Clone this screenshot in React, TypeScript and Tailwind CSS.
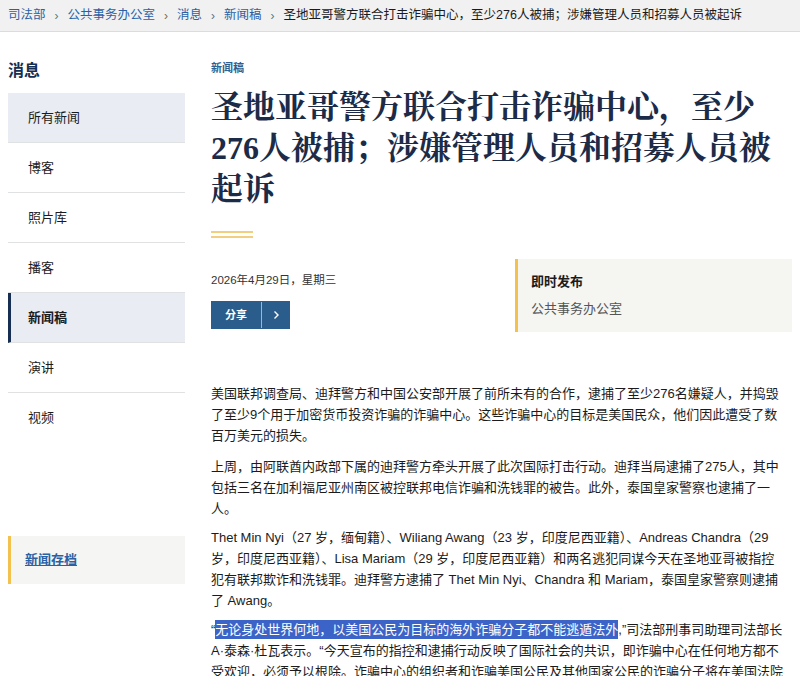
const sans = "font-['Liberation_Sans','Noto_Sans_CJK_SC',sans-serif]";

const navItems = [
  { label: '所有新闻', tone: 'shaded' },
  { label: '博客' },
  { label: '照片库' },
  { label: '播客' },
  { label: '新闻稿', tone: 'active' },
  { label: '演讲' },
  { label: '视频', last: true },
];

const crumbs = ['司法部', '公共事务办公室', '消息', '新闻稿'];

function Breadcrumb() {
  return (
    <div className="h-8 bg-[#f1f1f1] border-b border-[#dcdcdc] flex items-center px-2 text-[12.5px]">
      {crumbs.map((c) => (
        <span key={c} className="flex items-center">
          <a href="#" className="text-[#2a61a4]">{c}</a>
          <span className="mx-[9px] text-[#6d6d6d] text-[12px]">›</span>
        </span>
      ))}
      <span className="text-[#1b1b1b]">圣地亚哥警方联合打击诈骗中心，至少276人被捕；涉嫌管理人员和招募人员被起诉</span>
    </div>
  );
}

function Sidebar() {
  return (
    <aside className="w-[177px] shrink-0">
      <h2 className="mt-[29px] mb-[12px] text-[16px] leading-[20px] font-bold text-[#162e51]">消息</h2>
      <nav className="flex flex-col">
        {navItems.map((item) => (
          <a
            key={item.label}
            href="#"
            className={
              'h-[50px] flex items-center text-[13px] ' +
              (item.last ? '' : 'border-b border-[#dfe1e2] ') +
              (item.tone === 'active'
                ? 'bg-[#e9ecf2] border-l-[3px] border-l-[#162e51] pl-[17px] font-bold text-[#1b1b1b]'
                : item.tone === 'shaded'
                ? 'bg-[#e9ecf2] pl-5 text-[#1b1b1b]'
                : 'pl-5 text-[#1b1b1b]')
            }
          >
            {item.label}
          </a>
        ))}
      </nav>
      <div className="mt-[93px] h-[48px] bg-[#f5f5f3] border-l-[3px] border-[#f2c14e] flex items-center pl-[14px]">
        <a href="#" className="text-[13px] font-bold text-[#2a61a4] underline">新闻存档</a>
      </div>
    </aside>
  );
}

function Article() {
  return (
    <main className="w-[581px] shrink-0">
      <div className="mt-[29px] text-[11px] leading-[14px] font-bold text-[#2f5f8f]">新闻稿</div>
      <h1 className="mt-[12px] text-[32px] leading-[41px] font-bold text-[#1c2b48] font-['Liberation_Serif','Noto_Serif_CJK_SC','Noto_Sans_CJK_SC',serif]">
        圣地亚哥警方联合打击诈骗中心，至少276人被捕；涉嫌管理人员和招募人员被起诉
      </h1>
      <div className="mt-[21px] w-[42px] flex flex-col gap-[3px]">
        <div className="h-[2px] bg-[#f1cf7e]" />
        <div className="h-[2px] bg-[#f1cf7e]" />
      </div>

      <div className="mt-[21px] flex justify-between">
        <div className="pt-[13px]">
          <div className="text-[11.5px] leading-[16px] text-[#333]">2026年4月29日，星期三</div>
          <button className="mt-[13px] h-[28px] flex items-stretch bg-[#2a5d8b] text-white">
            <span className="px-[14px] flex items-center text-[11px] font-bold">分享</span>
            <span className="w-px bg-[#9fb6cc] my-[1px]" />
            <span className="w-[28px] flex items-center justify-center">
              <svg width="10" height="10" viewBox="0 0 10 10" fill="none" stroke="white" strokeWidth="1.4">
                <path d="M3.5 1.5 L7 5 L3.5 8.5" />
              </svg>
            </span>
          </button>
        </div>
        <div className="w-[277px] h-[73px] bg-[#f5f5f2] border-l-[3px] border-[#f2c14e] pl-[13px] pt-[15px]">
          <div className="text-[13px] leading-[16px] font-bold text-[#1b1b1b]">即时发布</div>
          <div className="mt-[11px] text-[13px] leading-[16px] text-[#555]">公共事务办公室</div>
        </div>
      </div>

      <div className="mt-[51px] text-[13px] leading-[21px] text-[#1b1b1b] w-[575px]">
        <p className="mb-[10px]">
          美国联邦调查局、迪拜警方和中国公安部开展了前所未有的合作，逮捕了至少276名嫌疑人，并捣毁了至少9个用于加密货币投资诈骗的诈骗中心。这些诈骗中心的目标是美国民众，他们因此遭受了数百万美元的损失。
        </p>
        <p className="mb-[8px]">
          上周，由阿联酋内政部下属的迪拜警方牵头开展了此次国际打击行动。迪拜当局逮捕了275人，其中包括三名在加利福尼亚州南区被控联邦电信诈骗和洗钱罪的被告。此外，泰国皇家警察也逮捕了一人。
        </p>
        <p className="mb-[8px]">
          Thet Min Nyi（27 岁，缅甸籍）、Wiliang Awang（23 岁，印度尼西亚籍）、Andreas Chandra（29 岁，印度尼西亚籍）、Lisa Mariam（29 岁，印度尼西亚籍）和两名逃犯同谋今天在圣地亚哥被指控犯有联邦欺诈和洗钱罪。迪拜警方逮捕了 Thet Min Nyi、Chandra 和 Mariam，泰国皇家警察则逮捕了 Awang。
        </p>
        <p>
          “<span className="bg-[#3c64c8] text-white py-[2px]">无论身处世界何地，以美国公民为目标的海外诈骗分子都不能逃遁法外</span>,”司法部刑事司助理司法部长A·泰森·杜瓦表示。“今天宣布的指控和逮捕行动反映了国际社会的共识，即诈骗中心在任何地方都不受欢迎，必须予以根除。诈骗中心的组织者和诈骗美国公民及其他国家公民的诈骗分子将在美国法院受到审判。”
        </p>
      </div>
    </main>
  );
}

export default function App() {
  return (
    <div className={`w-[800px] h-[676px] overflow-hidden bg-white ${sans}`}>
      <Breadcrumb />
      <div className="flex gap-[26px] px-2">
        <Sidebar />
        <Article />
      </div>
    </div>
  );
}
